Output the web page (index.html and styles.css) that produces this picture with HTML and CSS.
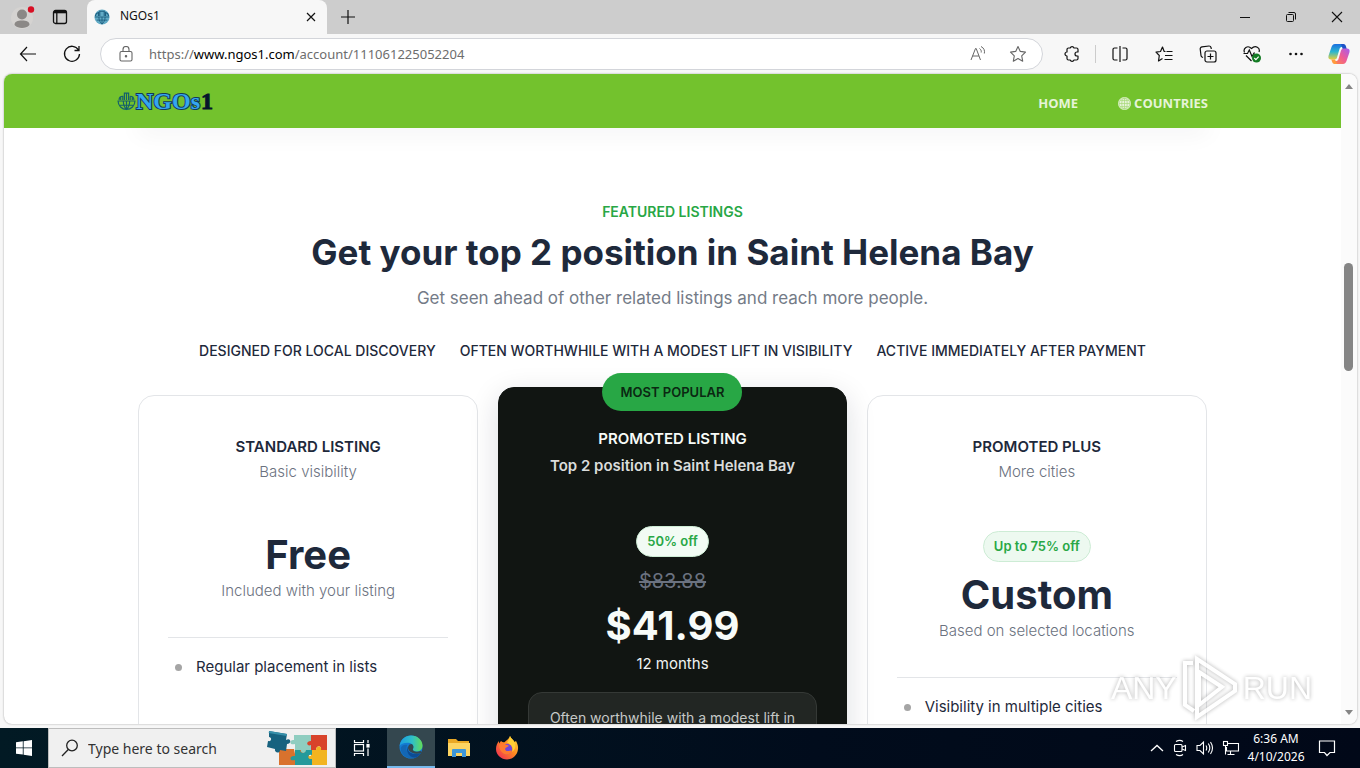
FILE: index.html
```html
<!DOCTYPE html>
<html lang="en">
<head>
<meta charset="utf-8">
<title>NGOs1</title>
<link rel="stylesheet" href="styles.css">
</head>
<body>
<svg class="defs" width="0" height="0" aria-hidden="true">
  <symbol id="globe" viewBox="0 0 18 18">
    <circle cx="9" cy="9" r="7.6"/><path d="M9 1.4v15.2M1.4 9h15.2M3 4.8h12M3 13.2h12"/><ellipse cx="9" cy="9" rx="3.8" ry="7.6"/>
  </symbol>
</svg>
<div class="screen">
  <header class="browser">
    <div class="tabstrip">
      <button class="icon-btn profile" aria-label="Profile">
        <svg width="26" height="26" viewBox="0 0 26 26"><circle cx="12" cy="14" r="11" fill="#d5d3d1"/><circle cx="12" cy="10.500" r="5" fill="#8b8886"/><path d="M4.500 21c0-3.500 3-4.500 7.500-4.500s7.500 1 7.500 4.500c-2 2.300-4.500 3-7.500 3s-5.500-.7-7.500-3z" fill="#8b8886"/><circle cx="21" cy="5.500" r="3.200" fill="#d80f24"/></svg>
      </button>
      <button class="icon-btn workspaces" aria-label="Tab actions">
        <svg width="16" height="16" viewBox="0 0 16 16" fill="none" stroke="#111" stroke-width="1.300"><rect x="1.500" y="1.500" width="13" height="13" rx="2"/><path d="M2 3h12" stroke-width="2.600"/><path d="M4.800 4v10.500"/></svg>
      </button>
      <div class="tab">
        <svg class="favicon" width="16" height="16" viewBox="0 0 18 18"><circle cx="9" cy="9" r="8.500" fill="#62abc6"/><path d="M1 9h16M3 12.500h12M5.500 9c0 4 1.500 6 3.500 8 2-2 3.500-4 3.500-8M9 9v8" fill="none" stroke="#1d5f80"/><path d="M1.500 8C2 5 3 4.500 5 4v4M16.500 8C16 5 15 4.500 13 4v4M6.500 8V2.500h5V8" fill="none" stroke="#1d5f80" stroke-width="1.200"/></svg>
        <span class="tab-title">NGOs1</span>
        <button class="icon-btn" aria-label="Close tab"><svg width="10" height="10" viewBox="0 0 10 10" stroke="#111" stroke-width="1.200"><path d="M1 1l8 8M9 1L1 9"/></svg></button>
      </div>
      <button class="icon-btn new-tab" aria-label="New tab"><svg width="14" height="14" viewBox="0 0 14 14" stroke="#111" stroke-width="1.200"><path d="M7 0v14M0 7h14"/></svg></button>
      <div class="window-buttons">
        <button class="icon-btn" aria-label="Minimize"><svg width="10" height="10" viewBox="0 0 10 10" stroke="#111"><path d="M0 5.500h10"/></svg></button>
        <button class="icon-btn" aria-label="Restore"><svg width="12" height="12" viewBox="0 0 12 12" fill="none" stroke="#111"><rect x="1.500" y="3.500" width="7" height="7" rx="1"/><path d="M3.500 1.500h5.500a1.500 1.500 0 0 1 1.500 1.500v5.500"/></svg></button>
        <button class="icon-btn" aria-label="Close"><svg width="12" height="12" viewBox="0 0 12 12" stroke="#111" stroke-width="1.100"><path d="M1 1l10 10M11 1L1 11"/></svg></button>
      </div>
    </div>
    <div class="toolbar">
      <button class="icon-btn nav" aria-label="Back"><svg width="18" height="16" viewBox="0 0 18 16" fill="none" stroke="#111" stroke-width="1.200"><path d="M17 8H1.500M8 1L1.500 8L8 15"/></svg></button>
      <button class="icon-btn nav" aria-label="Refresh"><svg width="18" height="18" viewBox="0 0 18 18" fill="none" stroke="#111" stroke-width="1.300"><path d="M15.500 5A7.500 7.500 0 1 0 16.500 9M16 1v4.500h-4.500"/></svg></button>
      <div class="address">
        <svg width="14" height="16" viewBox="0 0 14 16" fill="none" stroke="#666" stroke-width="1.100"><rect x="1" y="5.500" width="12" height="9.500" rx="1.500"/><path d="M4 5.500V3.500a3 3 0 0 1 6 0v2"/><circle cx="7" cy="10.200" r=".7" fill="#444"/></svg>
        <a class="url" href="#">https://<b>www.ngos1.com</b>/account/111061225052204</a>
        <button class="icon-btn" aria-label="Read aloud"><svg width="18" height="18" viewBox="0 0 18 18" fill="none" stroke="#666"><path d="M2 15L6.500 3.500h.7L11.500 15M3.600 11h6.300M10.500 3.500c1.500 1 2 2.500 1.700 4M12 1.500c3 1.500 4 4 3.300 7"/></svg></button>
        <button class="icon-btn" aria-label="Add to favorites"><svg width="18" height="18" viewBox="0 0 18 18" fill="none" stroke="#666" stroke-width="1.100" stroke-linejoin="round"><path d="M9 1.500l2.300 4.900 5.200.7-3.800 3.700 1 5.400L9 13.600l-4.700 2.600 1-5.400L1.500 7.100l5.200-.7z"/></svg></button>
      </div>
      <div class="tools">
        <button class="icon-btn" aria-label="Extensions"><svg width="18" height="18" viewBox="0 0 18 18" fill="none" stroke="#111" stroke-width="1.200" stroke-linejoin="round"><path d="M5.500 3h1.700a2 2 0 0 1 3.800 0h2.500a1.500 1.500 0 0 1 1.500 1.500V7h-1a2 2 0 0 0 0 4h1v2.500a1.500 1.500 0 0 1-1.500 1.500H11a2 2 0 0 1-3.800 0H5.500A1.500 1.500 0 0 1 4 13.500V11a2 2 0 0 1 0-4V4.500A1.500 1.500 0 0 1 5.500 3z"/></svg></button>
        <button class="icon-btn split" aria-label="Split screen"><svg width="18" height="18" viewBox="0 0 18 18" fill="none" stroke="#111" stroke-width="1.200"><path d="M6.500 3H3.500a1.500 1.500 0 0 0-1.500 1.500v9A1.500 1.500 0 0 0 3.500 15h3M11.500 3h3a1.500 1.500 0 0 1 1.500 1.500v9a1.500 1.500 0 0 1-1.500 1.500h-3M9 1v16"/></svg></button>
        <button class="icon-btn" aria-label="Favorites"><svg width="18" height="18" viewBox="0 0 18 18" fill="none" stroke="#111" stroke-width="1.200" stroke-linejoin="round"><path d="M10.500 6.500H9.200L7.500 2 5.500 6.500l-4.500.7 3.300 3.300-.8 5.500 4-2.500M11.500 6.500h6M10 10.500h7.500M9.500 14.500h8"/></svg></button>
        <button class="icon-btn" aria-label="Collections"><svg width="18" height="18" viewBox="0 0 18 18" fill="none" stroke="#111" stroke-width="1.200"><rect x="6" y="6" width="11" height="11" rx="2"/><path d="M11.500 8.500v6M8.500 11.500h6M4 12.500l-1-.5a2 2 0 0 1-1-1.500L1.200 4A2 2 0 0 1 3 1.800L10 1a2 2 0 0 1 2 1.500l.3 1.500"/></svg></button>
        <button class="icon-btn" aria-label="Browser essentials"><svg width="18" height="18" viewBox="0 0 18 18" fill="none" stroke="#111" stroke-width="1.200"><path d="M1.500 7.500C-.2 3.500 4.500-.5 8.500 3.500 12.500-.5 17.500 3 16 7M.5 8.500h4L6.300 5l2.700 6.500 2-3.500h1M3 10.500l5.500 5.500"/><circle cx="13.500" cy="13" r="4.500" fill="#137b23" stroke="none"/><path d="M11.300 13l1.600 1.600 2.800-3" stroke="#fff"/></svg></button>
        <button class="icon-btn" aria-label="Settings and more"><svg width="18" height="18" viewBox="0 0 18 18" fill="#111"><circle cx="3.500" cy="9" r="1.300"/><circle cx="9" cy="9" r="1.300"/><circle cx="14.500" cy="9" r="1.300"/></svg></button>
        <button class="icon-btn copilot" aria-label="Copilot"><svg width="24" height="24" viewBox="0 0 24 24"><defs><linearGradient id="cpa" x1="0" y1="0" x2="0" y2="1"><stop offset="0" stop-color="#1b6fe0"/><stop offset=".5" stop-color="#2bb6d0"/><stop offset="1" stop-color="#e7cf3a"/></linearGradient><linearGradient id="cpb" x1="1" y1="0" x2="0" y2="1"><stop offset="0" stop-color="#a45cf0"/><stop offset=".5" stop-color="#ee5b96"/><stop offset="1" stop-color="#ff8a45"/></linearGradient></defs><path d="M16 2H8C6 2 5 3.500 4.500 5L1.600 13.500C.8 16 2 17.500 4 17.500h3.500c1.500 0 2.200-1 2.600-2.300L12.500 7c.5-1.500 1.200-2 3-2h1.700z" fill="url(#cpa)"/><path d="M14 2h2.500c1.500 0 2 1 2.500 2.500l.7 2.500h-4z" fill="#1d52c7"/><path d="M8 22h8c2 0 3-1.500 3.500-3l2.900-8.500c.8-2.500-.4-4-2.400-4h-3.500c-1.500 0-2.200 1-2.600 2.300L11.500 17c-.5 1.500-1.200 2-3 2H6.800z" fill="url(#cpb)"/><path d="M10 22H7.500C6 22 5.500 21 5 19.500l-.7-2H8z" fill="#ff9a3e"/></svg></button>
      </div>
    </div>
  </header>

  <div class="viewport">
    <div class="page">
      <nav class="site-nav">
        <a class="brand" href="#" aria-label="NGOs1">
          <svg width="19" height="20" viewBox="0 0 18 18" fill="none" stroke="#14606b" stroke-width="1.100"><path d="M1 9h16a8 8 0 0 1-16 0zM3 13h12M6 9c0 4 1 6 3 8 2-2 3-4 3-8M9 9v8M2 8c0-2.500 1-3.500 3.500-3.500V8M7 8V1.500h4V8M12.500 4.500C15 4.500 16 5.500 16 8M9 1.500V8M12.500 4.500V8M3.500 5.500V8M14.500 5.500V8"/></svg>
          <span class="brand-name">NGOs</span><span class="brand-one">1</span>
        </a>
        <div class="site-links">
          <a href="#">HOME</a>
          <a href="#"><svg width="13" height="13" viewBox="0 0 18 18"><circle cx="9" cy="9" r="9" fill="#e6f4d8"/><use href="#globe" fill="none" stroke="#a9d97b" stroke-width="1"/></svg> COUNTRIES</a>
        </div>
      </nav>
      <main>
        <div class="prev-card"></div>
        <section class="pricing">
          <p class="eyebrow">FEATURED LISTINGS</p>
          <h1>Get your top 2 position in Saint Helena Bay</h1>
          <p class="lead">Get seen ahead of other related listings and reach more people.</p>
          <ul class="points"><li>DESIGNED FOR LOCAL DISCOVERY</li><li>OFTEN WORTHWHILE WITH A MODEST LIFT IN VISIBILITY</li><li>ACTIVE IMMEDIATELY AFTER PAYMENT</li></ul>
          <div class="plans">
            <article class="plan">
              <h2>STANDARD LISTING</h2>
              <p class="sub">Basic visibility</p>
              <div class="offer"><p class="price">Free</p><p class="sub">Included with your listing</p></div>
              <ul class="features"><li>Regular placement in lists</li></ul>
            </article>
            <article class="plan promoted">
              <span class="ribbon">MOST POPULAR</span>
              <h2>PROMOTED LISTING</h2>
              <p class="sub strong">Top 2 position in Saint Helena Bay</p>
              <div class="offer"><span class="pill">50% off</span><s class="was">$83.88</s><p class="price">$41.99</p><p class="sub term">12 months</p></div>
              <p class="note">Often worthwhile with a modest lift in</p>
            </article>
            <article class="plan">
              <h2>PROMOTED PLUS</h2>
              <p class="sub">More cities</p>
              <div class="offer"><span class="pill">Up to 75% off</span><p class="price">Custom</p><p class="sub">Based on selected locations</p></div>
              <ul class="features"><li>Visibility in multiple cities</li></ul>
            </article>
          </div>
        </section>
      </main>
    </div>
    <div class="scrollbar" aria-hidden="true">
      <span class="arrow up"></span><span class="thumb"></span><span class="arrow down"></span>
    </div>
  </div>

  <footer class="taskbar">
    <button class="start" aria-label="Start"><svg width="16" height="16" viewBox="0 0 16 16" fill="#fff"><path d="M0 2.300L6.800 1.300v6.200H0zM7.600 1.200L16 0v7.500H7.600zM0 8.300h6.800v6.300L0 13.700zM7.600 8.300H16V16l-8.400-1.200z"/></svg></button>
    <div class="search">
      <svg width="18" height="18" viewBox="0 0 18 18" fill="none" stroke="#222" stroke-width="1.300"><circle cx="11" cy="6.500" r="5.300"/><path d="M7.300 10.500L1 17"/></svg>
      <input type="text" aria-label="Search" placeholder="Type here to search">
      <svg class="puzzle" width="64" height="38" viewBox="0 0 64 38">
        <path d="M14 20h15l1 5 4-1 1-4h9v16H14z" fill="#d9722d"/>
        <path d="M29 6h18v6c4-3 6 3 0 4v5h-6c1 4-6 4-5 0h-6v-6c-6 2-6-5-1-4z" fill="#8fcdc0"/>
        <path d="M46 6h16v15h-6c1-5-5-5-5 0h-5v-5c-4 2-6-4 0-4z" fill="#d8432b"/>
        <path d="M46 21h5c0-5 6-5 5 0h6v15H46v-5c-5 2-5-5 0-4z" fill="#f2b420"/>
        <path d="M30 21h5c0 4 6 4 6 0h6v5c-5-2-5 5 0 4v6H30v-5c-6 2-6-5 0-4z" fill="#259a9b"/>
        <path d="M4 2l18 3-1 6c5-3 6 4 1 4l-1 7-6-1c0 4-6 3-5-1l-8-2 1-6c4 1 4-4 1-4z" fill="#17627f"/>
        <path d="M4 2l18 3-.3 2L3.700 4z" fill="#3790aa"/>
      </svg>
    </div>
    <button class="app task-view" aria-label="Task view"><svg width="18" height="18" viewBox="0 0 18 18" fill="none" stroke="#fff" stroke-width="1.200"><path d="M1.500 1v2.500h9V1M1.500 17v-2.500h9V17M15 1v3M15 9.500V17"/><rect x="1.500" y="5.500" width="9" height="6.500"/><rect x="14" y="5.500" width="2" height="2.500" fill="#fff"/></svg></button>
    <button class="app active" aria-label="Microsoft Edge"><svg width="24" height="24" viewBox="0 0 24 24"><defs><linearGradient id="eg" x1="0" y1="0" x2="1" y2="0"><stop offset="0" stop-color="#1b9de2"/><stop offset=".55" stop-color="#2fc0c7"/><stop offset="1" stop-color="#63dc57"/></linearGradient></defs><circle cx="12" cy="12" r="11.500" fill="#137bd2"/><path d="M.6 11C1.500 4.500 6.500.5 12 .5c7 0 11.500 5 11.500 10 0 4-3 6-6.200 6-3 0-4-1.200-3.500-2.200 1.300-2.500.5-6-4.300-6.500C5 7.500 1.500 9 .6 11z" fill="url(#eg)"/><path d="M8.300 10C6 14 8.500 21 15 22.500c-6 2.500-13-2-13.300-9C2 10.500 5.500 9 8.300 10z" fill="#1367b5"/><path d="M9.500 10.500c-2.500 5 2 10.500 12.300 7.500-2 3.500-4.500 4.700-6.800 4.800C9 21.500 6 15 9.500 10.500z" fill="#0d4c94"/><path d="M13.800 14.300c1.500-2.500.3-4.500-1.300-5.300-3 0-4.500 3.500-2.500 6.500 2 2.700 7 4 11.800 2.500.6-.5.500-2-.5-2-3 1.200-7.500.8-7.500-1.700z" fill="#34474f"/></svg></button>
    <button class="app" aria-label="File Explorer"><svg width="22" height="20" viewBox="0 0 22 20"><path d="M0 1h8l2 2h11v4H0z" fill="#e9a825"/><path d="M0 5h22v13H0z" fill="#fcd462"/><path d="M4 19v-7a1 1 0 0 1 1-1h12a1 1 0 0 1 1 1v7h-4v-4H8v4z" fill="#3d96d8"/></svg></button>
    <button class="app" aria-label="Firefox"><svg width="24" height="24" viewBox="0 0 24 24"><defs><linearGradient id="ff" x1="1" y1="0" x2="0" y2="1"><stop offset="0" stop-color="#ffe13c"/><stop offset=".45" stop-color="#ff8a20"/><stop offset="1" stop-color="#f0205b"/></linearGradient></defs><path d="M15 0c1 2.500 3 3.500 4.500 6l1.500-1c1.500 3 2.300 5 2 8-.6 6.500-5.500 10.500-11 10.500S1 19 1 13c0-3 1-6 3-8v2.500l2-2.500c.8 1 2 1.200 3.500 1.200C11.500 4 14 3 15 0z" fill="url(#ff)"/><circle cx="12" cy="13" r="5.200" fill="#7047d8"/><path d="M4 9c2-2 5-2 7-.2 1.500.2 2.500.5 2.800 1.200L10.500 12c-1 1 .2 3.500 3 3 1.500-.3 2.500-.8 3.500 0-1.500 3.500-5.500 4.500-8.500 2.500S4 12 4 9z" fill="#ff7a30"/><path d="M15 0c1 2.500 3 3.500 4.500 6 2 4 .5 8-2.500 10 2-4.500-.5-7.500-5-9.500C13.500 5 14.500 3 15 0z" fill="#ffcf35"/></svg></button>
    <div class="tray">
      <button class="icon-btn" aria-label="Show hidden icons"><svg width="14" height="8" viewBox="0 0 14 8" fill="none" stroke="#fff" stroke-width="1.300"><path d="M1 7l6-5.500L13 7"/></svg></button>
      <button class="icon-btn" aria-label="Meet now"><svg width="16" height="18" viewBox="0 0 14 18" fill="none" stroke="#fff" stroke-width="1.100"><rect x="1.500" y="5.500" width="7.500" height="7" rx="1"/><path d="M9 8l3.500-1.500v5L9 10M3 2.500c2.500-1.500 5-1.500 7 0M3 15.500c2.500 1.500 5 1.500 7 0"/></svg></button>
      <button class="icon-btn" aria-label="Volume"><svg width="18" height="16" viewBox="0 0 18 16" fill="none" stroke="#fff" stroke-width="1.100"><path d="M1 5.500h3L7.500 2v12L4 10.500H1zM10 5.500q1.500 2.500 0 5M12.300 3.500q3 4.500 0 9M14.500 2q4 6 0 12"/></svg></button>
      <button class="icon-btn" aria-label="Network"><svg width="18" height="16" viewBox="0 0 18 16" fill="none" stroke="#fff" stroke-width="1.100"><path d="M6 3.500h10.500v7.500H4.500V7M8.500 11v3.500M5.500 14.500h7"/><rect x="1.500" y="1.500" width="4" height="4"/><path d="M3.500 5.500v9"/></svg></button>
      <div class="clock"><span>6:36 AM</span><span>4/10/2026</span></div>
      <button class="icon-btn" aria-label="Notifications"><svg width="18" height="18" viewBox="0 0 18 18" fill="none" stroke="#fff" stroke-width="1.200"><path d="M1.500 2h15v11.500H12L9 16.500 6.500 13.500h-5z"/></svg></button>
    </div>
  </footer>

  <div class="watermark" aria-hidden="true">
    <span>ANY</span>
    <svg width="58" height="66" viewBox="0 0 58 66" fill="none" stroke="#fff" stroke-width="4"><path d="M16 4L54 29v7L16 62zM18 17v33l23-18zM12 8H4v42l9 6"/></svg>
    <span>RUN</span>
  </div>
</div>
</body>
</html>
```
FILE: styles.css
```css
* { box-sizing: border-box; }
body { margin: 0; font-family: "Noto Sans", sans-serif; color: #1e293b; }
h1, h2, p, ul { margin: 0; padding: 0; }
ul { list-style: none; }
a { color: inherit; text-decoration: none; }
button { border: 0; padding: 0; background: none; font: inherit; color: inherit; }
svg { display: block; flex: none; }
.defs { position: absolute; }

.screen { position: relative; display: flex; flex-direction: column; height: 100vh; overflow: hidden; background: #f7f7f7; }
.icon-btn { display: flex; align-items: center; justify-content: center; flex: none; }

/* Browser chrome */
.browser { flex: none; }
.tabstrip { display: flex; align-items: center; height: 34px; background: #cdcdcd; }
.profile { width: 48px; padding-right: 2px; }
.workspaces { width: 24px; }
.tab { display: flex; align-items: center; gap: 10px; width: 240px; height: 34px; margin-left: 15px; padding: 0 11px 0 7px; background: #f7f7f7; border-radius: 8px 8px 0 0; }
.tab-title { flex: 1; font-size: 12px; line-height: 18px; padding-bottom: 2px; color: #111; }
.new-tab { width: 42px; height: 34px; }
.window-buttons { display: flex; margin-left: auto; }
.window-buttons .icon-btn { width: 46px; height: 34px; }
.toolbar { display: flex; align-items: center; height: 40px; padding-left: 6px; }
.nav { width: 44px; }
.address { display: flex; align-items: center; flex: 1; gap: 22px; height: 32px; margin-left: 6px; padding: 0 15px 0 18px; background: #fff; border: 1px solid #d3d5da; border-radius: 16px; }
.url { flex: 1; margin-left: -6px; font-size: 13px; color: #6d6d6d; }
.url b { font-weight: 400; color: #000; }
.tools { display: flex; align-items: center; width: 317px; padding-left: 20px; gap: 26px; }
.split { position: relative; margin-left: 4px; }
.split::before { content: ""; position: absolute; left: -16px; top: 0; width: 1px; height: 18px; background: #ccc; }
.copilot { margin-left: -4px; }

/* Page area */
.viewport { display: flex; flex: 1; min-height: 0; margin: 0 3px 4px 4px; background: #fff; border-radius: 8px; overflow: hidden; box-shadow: 0 0 2px #999; }
.page { flex: 1; min-width: 0; overflow: hidden; }
.site-nav { position: relative; display: flex; align-items: center; justify-content: space-between; height: 54px; padding: 0 133px 0 113px; background: #73c22d; }
.brand { display: flex; align-items: center; font: 700 24px "Liberation Serif", serif; }
.brand-name { color: #35a6ee; -webkit-text-stroke: 2px #12395c; paint-order: stroke fill; }
.brand-one { color: #06152b; margin-left: 1px; -webkit-text-stroke: 1px #06152b; }
.site-links { display: flex; gap: 40px; padding-top: 4px; font: 700 13px "Open Sans", sans-serif; color: #e6f4d8; }
.site-links a { display: flex; align-items: center; gap: 3px; }
.prev-card { height: 12px; margin: -12px auto 0; max-width: 1070px; box-shadow: 0 4px 24px rgba(15, 23, 42, .07); }
.pricing { padding: 76px 20px 0; font-family: Inter, sans-serif; text-align: center; }
.eyebrow { font-size: 14px; line-height: 16px; font-weight: 600; color: #28a745; }
h1 { margin-top: 8px; font-size: 35px; line-height: 48px; font-weight: 700; }
.lead { margin-top: 10px; font-size: 17px; line-height: 24px; color: #747b87; }
.points { display: flex; justify-content: center; gap: 24px; margin-top: 31px; font-size: 14px; line-height: 20px; font-weight: 500; white-space: nowrap; }
.plans { display: grid; grid-template-columns: 340fr 348fr 340fr; gap: 20px; max-width: 1069px; margin: 34px auto 0; align-items: start; }
.plan { min-height: 480px; padding: 39px 29px; border: 1px solid #e3e5e8; border-radius: 16px; }
.plan h2 { font-size: 15px; line-height: 24px; font-weight: 600; }
.sub { font-size: 15px; line-height: 24px; font-weight: 300; color: #6b7280; }
.plan h2 + .sub { margin-top: 1px; }
.offer { display: flex; flex-direction: column; align-items: center; margin-top: 47px; }
.price { font-size: 40px; line-height: 48px; font-weight: 700; }
.pill { padding: 4px 10px; font-size: 13px; line-height: 21px; font-weight: 600; color: #28a745; background: #edf9f0; border: 1px solid #cdecd5; border-radius: 16px; }
.pill + .price { margin-top: 9px; }
.features { margin-top: 34px; padding-top: 17px; border-top: 1px solid #e3e5e8; text-align: left; font-size: 15px; line-height: 24px; }
.features li { display: flex; align-items: center; gap: 14px; padding-left: 7px; }
.features li::before { content: ""; width: 7px; height: 7px; border-radius: 50%; background: #a5a5a5; }
.promoted { position: relative; margin-top: -8px; background: #111512; border-color: #111512; color: #f7fbf8; box-shadow: 0 8px 30px rgba(15, 23, 42, .14); }
.ribbon { position: absolute; top: -15px; left: 50%; transform: translateX(-50%); padding: 0 18px; font-size: 13px; line-height: 38px; font-weight: 600; white-space: nowrap; color: #0b2812; background: #28a745; border-radius: 19px; }
.promoted .sub { font-weight: 400; }
.promoted .sub.strong { line-height: 28px; font-weight: 600; color: #dadcdb; }
.promoted .offer { margin-top: 46px; }
.promoted .pill { background: #f2fbf4; }
.was { margin-top: 11px; font-size: 20px; line-height: 26px; color: #6b7280; }
.promoted .price { margin-top: 8px; }
.sub.term { margin-top: 2px; color: #f0f3f1; }
.note { margin-top: 16px; padding: 13px 16px; font-size: 14px; line-height: 24px; color: #c6c9c7; background: #222623; border: 1px solid #353936; border-radius: 14px; }
.scrollbar { display: flex; flex-direction: column; align-items: center; width: 16px; padding: 10px 1px 9px 0; background: #fbfbfb; }
.arrow { border: 4px solid transparent; }
.up { border-top: 0; border-bottom: 5px solid #858585; }
.down { border-bottom: 0; border-top: 5px solid #858585; margin-top: auto; }
.thumb { width: 9px; height: 108px; margin-top: 174px; background: #858585; border-radius: 5px; }

/* Taskbar */
.taskbar { display: flex; flex: none; height: 40px; background: linear-gradient(90deg, #021a24, #010c1c 60%, #010818); color: #fff; }
.start { display: flex; align-items: center; justify-content: center; width: 48px; }
.search { display: flex; align-items: center; width: 288px; padding: 0 6px 0 12px; background: #f0f0f0; border: 1px solid #bdbdbd; }
.search input { flex: 1; min-width: 0; margin-left: 7px; border: 0; background: none; font: 14px "Noto Sans", sans-serif; }
.search input::placeholder { color: #333; opacity: 1; }
.app { display: flex; align-items: center; justify-content: center; width: 48px; }
.task-view { width: 51px; }
.app.active { background: #34474f; border-bottom: 2px solid #76b9ed; }
.tray { display: flex; align-items: center; gap: 8px; margin-left: auto; padding-right: 24px; }
.clock { display: flex; flex-direction: column; align-items: center; width: 56px; font-size: 12px; line-height: 18px; }
.tray .clock + .icon-btn { margin-left: 6px; }

/* Recording watermark over the desktop */
.watermark { position: absolute; right: 48px; bottom: 47px; display: flex; align-items: center; gap: 4px; font: 32px "Liberation Sans", sans-serif; color: #fff; filter: drop-shadow(0 0 2px rgba(0, 0, 0, .4)); opacity: .75; }
```
